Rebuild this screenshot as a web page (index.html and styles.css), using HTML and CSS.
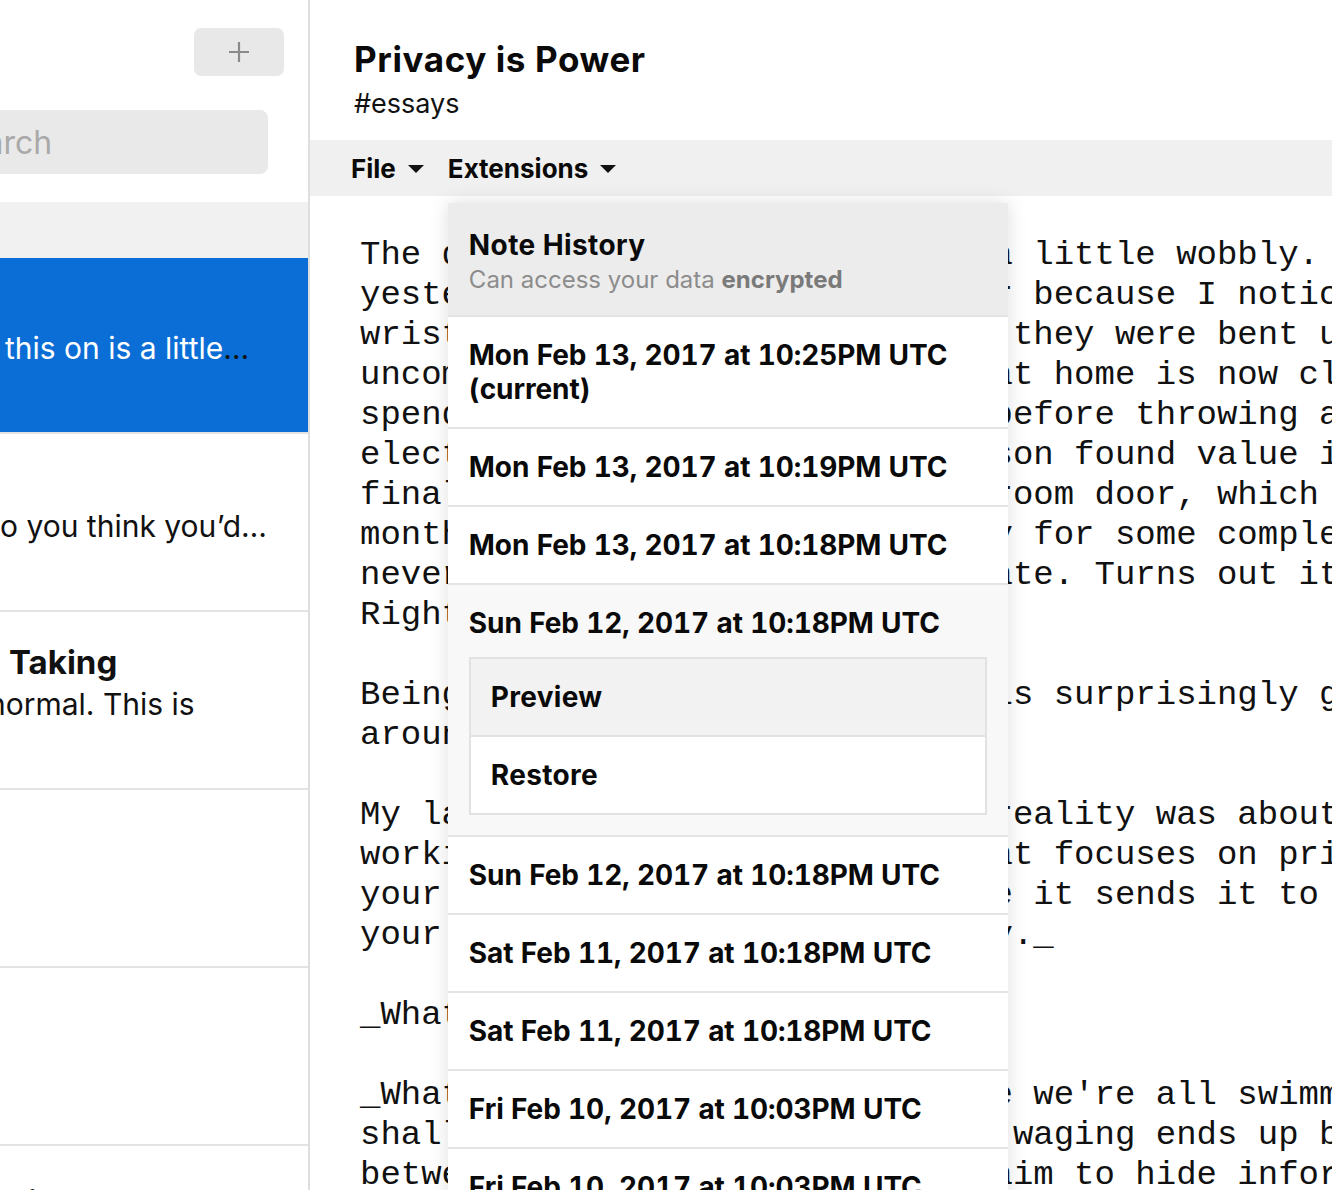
FILE: index.html
```html
<!DOCTYPE html>
<html lang="en">
<head>
<meta charset="utf-8">
<title>Privacy is Power</title>
<link rel="stylesheet" href="styles.css">
</head>
<body>
<div class="app">
  <aside class="sidebar">
    <div class="sb-top">
      <button class="add-btn" aria-label="New note">
        <svg width="22" height="22" viewBox="0 0 22 22"><path d="M11 1v20M1 11h20" stroke="#8a8a8a" stroke-width="2.2" fill="none"/></svg>
      </button>
      <div class="search">Search</div>
    </div>
    <div class="list-header"></div>
    <div class="note selected">
      <div class="note-title"></div>
      <div class="note-preview">this on is a little<span class="ell">…</span></div>
    </div>
    <div class="note">
      <div class="note-title"></div>
      <div class="note-preview flush">o you think you’d…</div>
    </div>
    <div class="note">
      <div class="note-title">Taking</div>
      <div class="note-preview cut">normal. This is</div>
    </div>
    <div class="note">
      <div class="note-title"></div>
      <div class="note-preview"></div>
    </div>
    <div class="note">
      <div class="note-title"></div>
      <div class="note-preview"></div>
    </div>
    <div class="note">
      <div class="note-title last">rsion some some</div>
      <div class="note-preview"></div>
    </div>
  </aside>

  <main class="main">
    <header class="note-header">
      <h1 class="note-name">Privacy is Power</h1>
      <div class="note-tags">#essays</div>
    </header>
    <nav class="menubar">
      <div class="menu">File <svg class="caret" width="16" height="8" viewBox="0 0 16 8"><path d="M0 0h16L8 8z" fill="#111"/></svg></div>
      <div class="menu menu-ext">Extensions <svg class="caret" width="16" height="8" viewBox="0 0 16 8"><path d="M0 0h16L8 8z" fill="#111"/></svg>
        <div class="dropdown">
          <div class="dd-head">
            <div class="dd-title">Note History</div>
            <div class="dd-sub">Can access your data <b>encrypted</b></div>
          </div>
          <div class="dd-item">Mon Feb 13, 2017 at 10:25PM UTC (current)</div>
          <div class="dd-item">Mon Feb 13, 2017 at 10:19PM UTC</div>
          <div class="dd-item">Mon Feb 13, 2017 at 10:18PM UTC</div>
          <div class="dd-item open">Sun Feb 12, 2017 at 10:18PM UTC
            <div class="actions">
              <div class="action hover">Preview</div>
              <div class="action">Restore</div>
            </div>
          </div>
          <div class="dd-item">Sun Feb 12, 2017 at 10:18PM UTC</div>
          <div class="dd-item">Sat Feb 11, 2017 at 10:18PM UTC</div>
          <div class="dd-item">Sat Feb 11, 2017 at 10:18PM UTC</div>
          <div class="dd-item">Fri Feb 10, 2017 at 10:03PM UTC</div>
          <div class="dd-item">Fri Feb 10, 2017 at 10:03PM UTC</div>
        </div>
      </div>
    </nav>
    <div class="editor">The desk I'm typing this on is a little wobbly. It started
yesterday, it got a lot wobblier because I noticed my chair
wrists hurt. When I looked down they were bent under the
uncomfortably. The chair I had at home is now closer to
spending a few days at my desk before throwing away my
electric tape around it. No person found value in it, so
finally I set it beside the bedroom door, which was left
months it just sat there quietly for some complete stranger
never to be seen again, until late. Turns out it was
Right away, someone grabbed it.

Being able to give things away is surprisingly good
around for free.

My last encounter with virtual reality was about a
working on a new sort of app that focuses on privacy and
your data is encoded on a device it sends it to the
your own servers, then privately._

_What does it mean?_

_What happens in our world where we're all swimming in
shallow data lakes, and the war waging ends up being
between users and the ones who aim to hide information</div>
  </main>
</div>
</body>
</html>
```

FILE: styles.css
```css
html, body {
  margin: 0;
  padding: 0;
}
body {
  width: 1332px;
  height: 1190px;
  overflow: hidden;
  background: #fff;
  color: #111;
  font-family: Inter, "Noto Sans", sans-serif;
}
.app {
  display: flex;
  height: 1190px;
}

/* Sidebar */
.sidebar {
  width: 308px;
  flex: none;
  border-right: 2px solid #dedede;
  overflow: hidden;
  display: flex;
  flex-direction: column;
}
.sb-top {
  height: 202px;
  flex: none;
  display: flex;
  flex-direction: column;
  align-items: flex-end;
}
.add-btn {
  margin: 28px 24px 0 0;
  width: 90px;
  height: 48px;
  border: 0;
  border-radius: 7px;
  background: #e8e8e8;
  display: flex;
  align-items: center;
  justify-content: center;
  padding: 0;
}
.search {
  align-self: stretch;
  margin: 34px 40px 0 -72px;
  height: 64px;
  border-radius: 8px;
  background: #e9e9e9;
  color: #a9a9a9;
  font-size: 32px;
  display: flex;
  align-items: center;
  padding-left: 18px;
  white-space: nowrap;
}
.list-header {
  height: 56px;
  flex: none;
  background: #f1f1f1;
}
.note {
  flex: none;
  border-bottom: 2px solid #e3e3e3;
  padding-top: 29px;
  box-sizing: border-box;
  height: 178px;
  white-space: nowrap;
  overflow: hidden;
}
.note.selected {
  background: #0b6ed6;
  color: #fff;
  height: 176px;
  padding-top: 27px;
}
.note-title {
  height: 42px;
  line-height: 42px;
  font-size: 33px;
  font-weight: 700;
  padding-left: 9px;
}
.note-title.last {
  padding-left: 0;
  margin-left: -4px;
  color: #222;
  margin-top: 6px;
}
.note-preview {
  height: 42px;
  line-height: 42px;
  font-size: 30px;
  padding-left: 5px;
}
.note-preview.flush {
  padding-left: 0;
}
.note-preview.cut {
  padding-left: 0;
  margin-left: -12px;
}
.ell {
  color: #111;
}

/* Main */
.main {
  flex: 1;
  min-width: 0;
  display: flex;
  flex-direction: column;
  position: relative;
}
.note-header {
  height: 140px;
  flex: none;
  box-sizing: border-box;
  padding: 38px 0 0 44px;
}
.note-name {
  margin: 0;
  font-size: 35px;
  letter-spacing: 0.6px;
  line-height: 42px;
  font-weight: 700;
  color: #0a0a0a;
}
.note-tags {
  margin-top: 6px;
  font-size: 27px;
  line-height: 36px;
  color: #111;
}
.menubar {
  height: 56px;
  flex: none;
  background: #f0f0f0;
  display: flex;
  align-items: center;
  padding-left: 41px;
  gap: 24px;
}
.menu {
  font-size: 26px;
  font-weight: 700;
  color: #0a0a0a;
  display: flex;
  align-items: center;
  gap: 12px;
}
.menu-ext {
  position: relative;
}
.caret {
  display: block;
  margin-top: 2px;
}

/* Dropdown */
.dropdown {
  position: absolute;
  top: 50px;
  left: 0;
  width: 560px;
  background: #fff;
  box-shadow: 0 0 18px rgba(0, 0, 0, 0.13);
  z-index: 10;
  font-weight: 700;
}
.dd-head {
  background: #ececec;
  padding: 25px 21px 17px;
  height: 112px;
  box-sizing: border-box;
}
.dd-title {
  font-size: 28px;
  letter-spacing: 0.4px;
  line-height: 34px;
  color: #0a0a0a;
}
.dd-sub {
  font-size: 24px;
  line-height: 36px;
  font-weight: 400;
  color: #8c8c8c;
}
.dd-sub b {
  font-weight: 700;
  color: #7a7a7a;
}
.dd-item {
  border-top: 2px solid #e4e4e4;
  padding: 21px 21px;
  font-size: 28px;
  letter-spacing: -0.1px;
  font-feature-settings: "tnum" 1;
  line-height: 34px;
  color: #0a0a0a;
}
.dd-item.open {
  background: #f8f8f8;
  padding-bottom: 20px;
}
.actions {
  margin-top: 17px;
  border: 2px solid #e2e2e2;
  background: #fff;
}
.action {
  padding: 21px 20px;
  line-height: 34px;
  letter-spacing: 0.3px;
}
.action + .action {
  border-top: 2px solid #e2e2e2;
}
.action.hover {
  background: #f2f2f2;
}

/* Editor */
.editor {
  flex: 1;
  overflow: hidden;
  padding: 39px 0 0 50px;
  font-family: "Liberation Mono", "Courier New", monospace;
  font-size: 34px;
  line-height: 40px;
  white-space: pre;
  color: #111;
}
```
